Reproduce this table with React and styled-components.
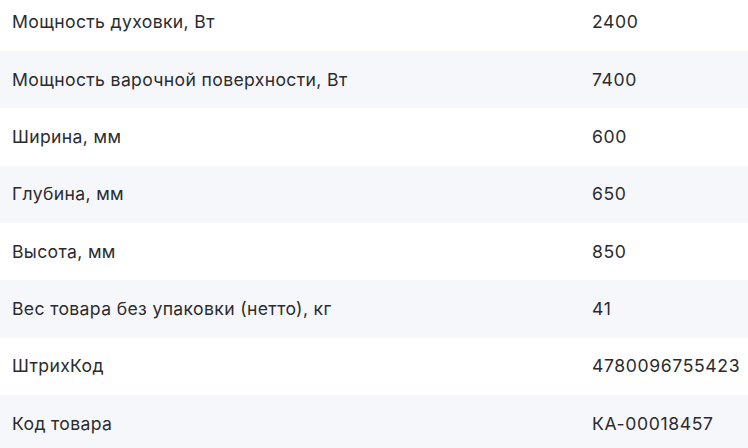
import React from "react";
import styled, { createGlobalStyle } from "styled-components";

const Global = createGlobalStyle`
  html, body { margin: 0; padding: 0; background: #ffffff; overflow: hidden; }
  body { font-family: Inter, "Noto Sans", sans-serif; }
`;

const Table = styled.div`
  display: flex;
  flex-direction: column;
  width: 748px;
  margin-top: -6.3px;
`;

const Row = styled.div`
  display: grid;
  grid-template-columns: 580px 1fr;
  align-items: center;
  height: 57.33px;
  padding: 0 12px;
  background: ${(p) => (p.$shaded ? "#f6f7fb" : "#ffffff")};
`;

const Cell = styled.span`
  font-size: 17.6px;
  line-height: 22px;
  color: #2b2b2e;
  white-space: nowrap;
  letter-spacing: ${(p) => (p.$value ? "0.035em" : "0.02em")};
`;

const specs = [
  ["Мощность духовки, Вт", "2400"],
  ["Мощность варочной поверхности, Вт", "7400"],
  ["Ширина, мм", "600"],
  ["Глубина, мм", "650"],
  ["Высота, мм", "850"],
  ["Вес товара без упаковки (нетто), кг", "41"],
  ["ШтрихКод", "4780096755423"],
  ["Код товара", "КА-00018457"],
];

export default function App() {
  return (
    <>
      <Global />
      <Table>
        {specs.map(([k, v], i) => (
          <Row key={k} $shaded={i % 2 === 1}>
            <Cell>{k}</Cell>
            <Cell $value>{v}</Cell>
          </Row>
        ))}
      </Table>
    </>
  );
}
